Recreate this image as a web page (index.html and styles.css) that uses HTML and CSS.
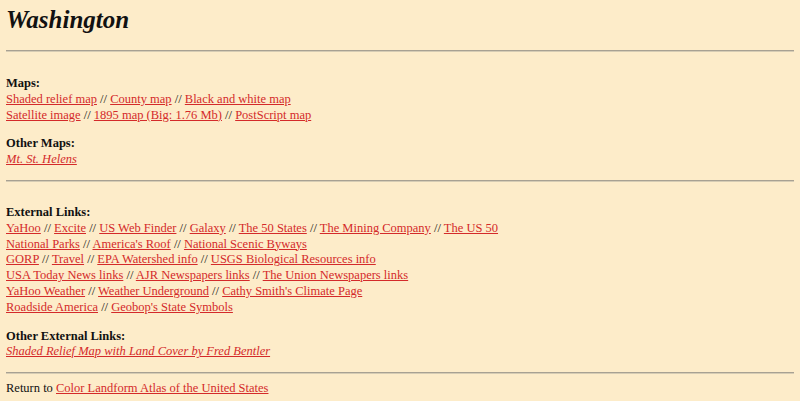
FILE: index.html
```html
<!DOCTYPE html>
<html lang="en">
<head>
  <meta charset="UTF-8">
  <title>Washington</title>
  <link rel="stylesheet" href="styles.css">
</head>
<body>
<h1 class="state-title">Washington</h1>
<hr class="rule">
<div class="section">
  <p class="block">
    <b>Maps:</b><br>
    <a href="#">Shaded relief map</a> // <a href="#">County map</a> // <a href="#">Black and white map</a><br>
    <a href="#">Satellite image</a> // <a href="#">1895 map (Big: 1.76 Mb)</a> // <a href="#">PostScript map</a>
  </p>
  <p class="block">
    <b>Other Maps:</b><br>
    <i><a href="#">Mt. St. Helens</a></i>
  </p>
</div>
<hr class="rule">
<div class="section">
  <p class="block">
    <b>External Links:</b><br>
    <a href="#">YaHoo</a> // <a href="#">Excite</a> // <a href="#">US Web Finder</a> // <a href="#">Galaxy</a> // <a href="#">The 50 States</a> // <a href="#">The Mining Company</a> // <a href="#">The US 50</a><br>
    <a href="#">National Parks</a> // <a href="#">America's Roof</a> // <a href="#">National Scenic Byways</a><br>
    <a href="#">GORP</a> // <a href="#">Travel</a> // <a href="#">EPA Watershed info</a> // <a href="#">USGS Biological Resources info</a><br>
    <a href="#">USA Today News links</a> // <a href="#">AJR Newspapers links</a> // <a href="#">The Union Newspapers links</a><br>
    <a href="#">YaHoo Weather</a> // <a href="#">Weather Underground</a> // <a href="#">Cathy Smith's Climate Page</a><br>
    <a href="#">Roadside America</a> // <a href="#">Geobop's State Symbols</a>
  </p>
  <p class="block">
    <b>Other External Links:</b><br>
    <i><a href="#">Shaded Relief Map with Land Cover by Fred Bentler</a></i>
  </p>
</div>
<hr class="rule">
<p class="return-line">Return to <a href="#">Color Landform Atlas of the United States</a></p>
</body>
</html>
```

FILE: styles.css
```css
body {
    margin: 0 6px;
    background: #fdecc9;
    color: #111;
    font-family: "Liberation Serif", "Times New Roman", serif;
    font-size: 12.5px;
    line-height: 15.8px;
}

a {
    color: #d42a2a;
}

.state-title {
    margin: 5px 0 0;
    font-size: 25px;
    line-height: 30px;
    font-style: italic;
    font-weight: bold;
}

/* the grey divider lines */
.rule {
    margin: 15px 0 8px;
    height: 0;
    border: 0;
    border-top: 1px solid #a8a192;
    border-bottom: 1px solid #d6ccb4;
}

.section + .rule {
    margin: 12px 0 7px;
}

.section {
    padding-top: 16px;
}

.block {
    margin: 0;
}

.block + .block {
    margin-top: 13px;
}

.return-line {
    margin: 0;
}
```
